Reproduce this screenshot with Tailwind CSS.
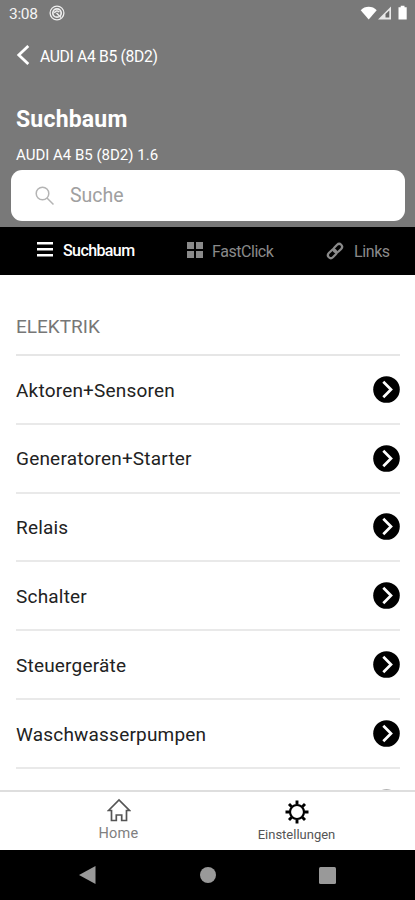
<!DOCTYPE html>
<html lang="de">
<head>
  <meta charset="UTF-8" />
  <meta name="viewport" content="width=device-width, initial-scale=1.0"/>
  <title>Suchbaum</title>
  <script src="https://cdn.jsdelivr.net/npm/@tailwindcss/browser@4"></script>
</head>
<body class="bg-white font-['Roboto',sans-serif] h-[900px] flex flex-col overflow-hidden whitespace-nowrap">

  <!-- Header -->
  <header class="h-[227px] shrink-0 bg-[#797979] text-white flex flex-col">
    <div class="h-7 pl-[9px] pr-[7px] flex items-center">
      <span class="text-[15.5px] leading-7 w-10 tracking-[-0.3px] text-[#f4f4f4]">3:08</span>
      <svg class="w-4 h-4 -mt-0.5" viewBox="0 0 16 16" fill="none" stroke="#eee">
        <circle cx="8" cy="8" r="6.9" stroke-width="1.3"/>
        <circle cx="8" cy="8" r="4.2" stroke-width="1.7"/>
        <path d="M5.5 8.2a2.6 2.6 0 0 1 4.8-1M7.5 8l4.5 4.5" stroke-width="1.5"/>
      </svg>
      <svg class="w-[48px] h-4 ml-auto -mt-0.5" viewBox="0 0 48 16" fill="#fff">
        <path d="M.7 5.2C4.8.6 12.6.6 16.7 5.2L8.7 14.6z"/>
        <path d="M18 14.600 31 1.600V14.600z" fill="#e8e8e8"/>
        <path d="M25.500 12.600V9L29.300 5.400V12.600z" fill="#686868"/>
        <path d="M38.500 2.200h2.200V.8h3.800v1.400h2.200V14.600h-8.200z"/>
      </svg>
    </div>

    <div class="h-14 pl-4 flex items-center">
      <svg class="w-3.5 h-5 -mt-0.5" viewBox="0 0 14 20" fill="none" stroke="#fff" stroke-width="2.8">
        <path d="M12.3 1 2.8 10l9.500 9"/>
      </svg>
      <span class="ml-2.5 mt-px text-[15.7px] tracking-[-0.33px]">AUDI A4 B5 (8D2)</span>
    </div>

    <h1 class="mt-[21px] pl-4 h-[30px] leading-[30px] text-[23px] tracking-[0.2px] font-bold">Suchbaum</h1>
    <p class="mt-[10px] pl-4 h-5 leading-5 text-[15px]">AUDI A4 B5 (8D2) 1.6</p>

    <div class="mt-[5px] ml-[11px] mr-2.5 h-[51px] rounded-[11px] bg-white flex items-center pl-6">
      <svg class="w-5 h-5" viewBox="0 0 20 20" fill="none" stroke="#b4b4b4" stroke-width="1.5">
        <circle cx="7.5" cy="7.5" r="6.3"/>
        <path d="m12 12 6.500 6.500"/>
      </svg>
      <span class="ml-[15px] mt-px text-[19.5px] text-[#a0a0a0]">Suche</span>
    </div>
  </header>

  <!-- Tabs -->
  <nav class="h-12 shrink-0 bg-black text-[#8a8a8a] text-base flex items-center pl-[37px]">
    <div class="w-[150px] flex items-center text-white font-medium">
      <svg class="w-4 h-4 -mt-1" viewBox="0 0 16 16" fill="currentColor">
        <path d="M0 1h16v2.600H0zM0 7h16v2.600H0zM0 13h16v2.600H0z"/>
      </svg>
      <span class="ml-2.5 tracking-[-0.6px]">Suchbaum</span>
    </div>
    <div class="w-[139px] flex items-center">
      <svg class="w-4 h-4 -mt-0.5" viewBox="0 0 16 16" fill="currentColor">
        <path d="M0 0h7v7H0zM9 0h7v7H9zM0 9h7v7H0zM9 9h7v7H9z"/>
      </svg>
      <span class="ml-[9px] mt-px tracking-[-0.45px]">FastClick</span>
    </div>
    <div class="flex items-center">
      <svg class="w-[18px] h-[18px]" viewBox="0 0 18 18" fill="none" stroke="currentColor" stroke-width="2.2">
        <rect x="-4.8" y="-2.9" width="9.6" height="5.8" rx="2.9" transform="translate(11.800 6.200) rotate(-45)"/>
        <rect x="-4.8" y="-2.9" width="9.6" height="5.8" rx="2.9" transform="translate(6.200 11.800) rotate(-45)"/>
      </svg>
      <span class="ml-2.5 mt-0.5 tracking-[-0.4px]">Links</span>
    </div>
  </nav>

  <!-- Liste -->
  <main class="flex-1 min-h-0 overflow-hidden pl-4 pr-[15px] text-[19px] text-[#222]">
    <h2 class="h-[81px] pt-[39px] leading-[26px] text-[#777] border-b-2 border-[#e6e6e6]">ELEKTRIK</h2>
    <ul id="list"></ul>
  </main>

  <!-- Navigation -->
  <footer class="h-[60px] shrink-0 border-t-2 border-[#dedede] text-[#808080] grid grid-cols-[237px_119px]">
    <div class="flex flex-col items-center pt-[6px]">
      <svg class="w-6 h-6" viewBox="0 0 24 24" fill="none" stroke="#555" stroke-width="1.7">
        <path d="M1.500 12.500 12 2l10.500 10.500H19.500V22.500H14.700V17H9.300V22.500H4.500V12.500z"/>
      </svg>
      <span class="text-[14.5px] leading-[18px] mt-[3px] tracking-[0.2px]">Home</span>
    </div>
    <div class="flex flex-col items-center pt-[8px]">
      <svg class="w-6 h-6" viewBox="-12 -12 24 24" fill="none" stroke="#000">
        <circle r="7" stroke-width="2.2"/>
        <path stroke-width="2.9" d="M0-7.500V-11.500M0 7.500V11.500M-7.500 0H-11.500M7.500 0H11.500M5.300-5.300 8-8M5.300 5.300 8 8M-5.300 5.300-8 8M-5.300-5.300-8-8"/>
      </svg>
      <span class="text-[13px] leading-[18px] mt-0.5 text-[#555]">Einstellungen</span>
    </div>
  </footer>

  <!-- Systemleiste -->
  <div class="h-[50px] shrink-0 bg-black flex items-center pl-[79px] text-[#999]">
    <svg class="w-[17px] h-[18px]" viewBox="0 0 17 18" fill="currentColor"><path d="M0 9 16.500 0v18z"/></svg>
    <div class="w-4 h-4 rounded-full bg-[#999] ml-[104px]"></div>
    <div class="w-[17px] h-[17px] rounded-[1.5px] bg-[#999] ml-[103px]"></div>
  </div>

  <script>
    const items = ['Aktoren+Sensoren', 'Generatoren+Starter', 'Relais', 'Schalter', 'Steuergeräte', 'Waschwasserpumpen', ''];
    document.getElementById('list').innerHTML = items.map(name => `
      <li class="h-[68.8px] flex items-center justify-between border-b-2 border-[#e9e9e9]">
        <span class="mt-[3px] tracking-[0.2px]">${name}</span>
        <svg class="w-[27px] h-[27px] ${name ? '' : 'opacity-40'}" viewBox="0 0 27 27" fill="none">
          <circle cx="13.5" cy="13.5" r="13.3" fill="#000"/>
          <path d="m10.300 5.800 7.700 7.700-7.700 7.700" stroke="#fff" stroke-width="2.7"/>
        </svg>
      </li>`).join('');
  </script>

</body>
</html>
